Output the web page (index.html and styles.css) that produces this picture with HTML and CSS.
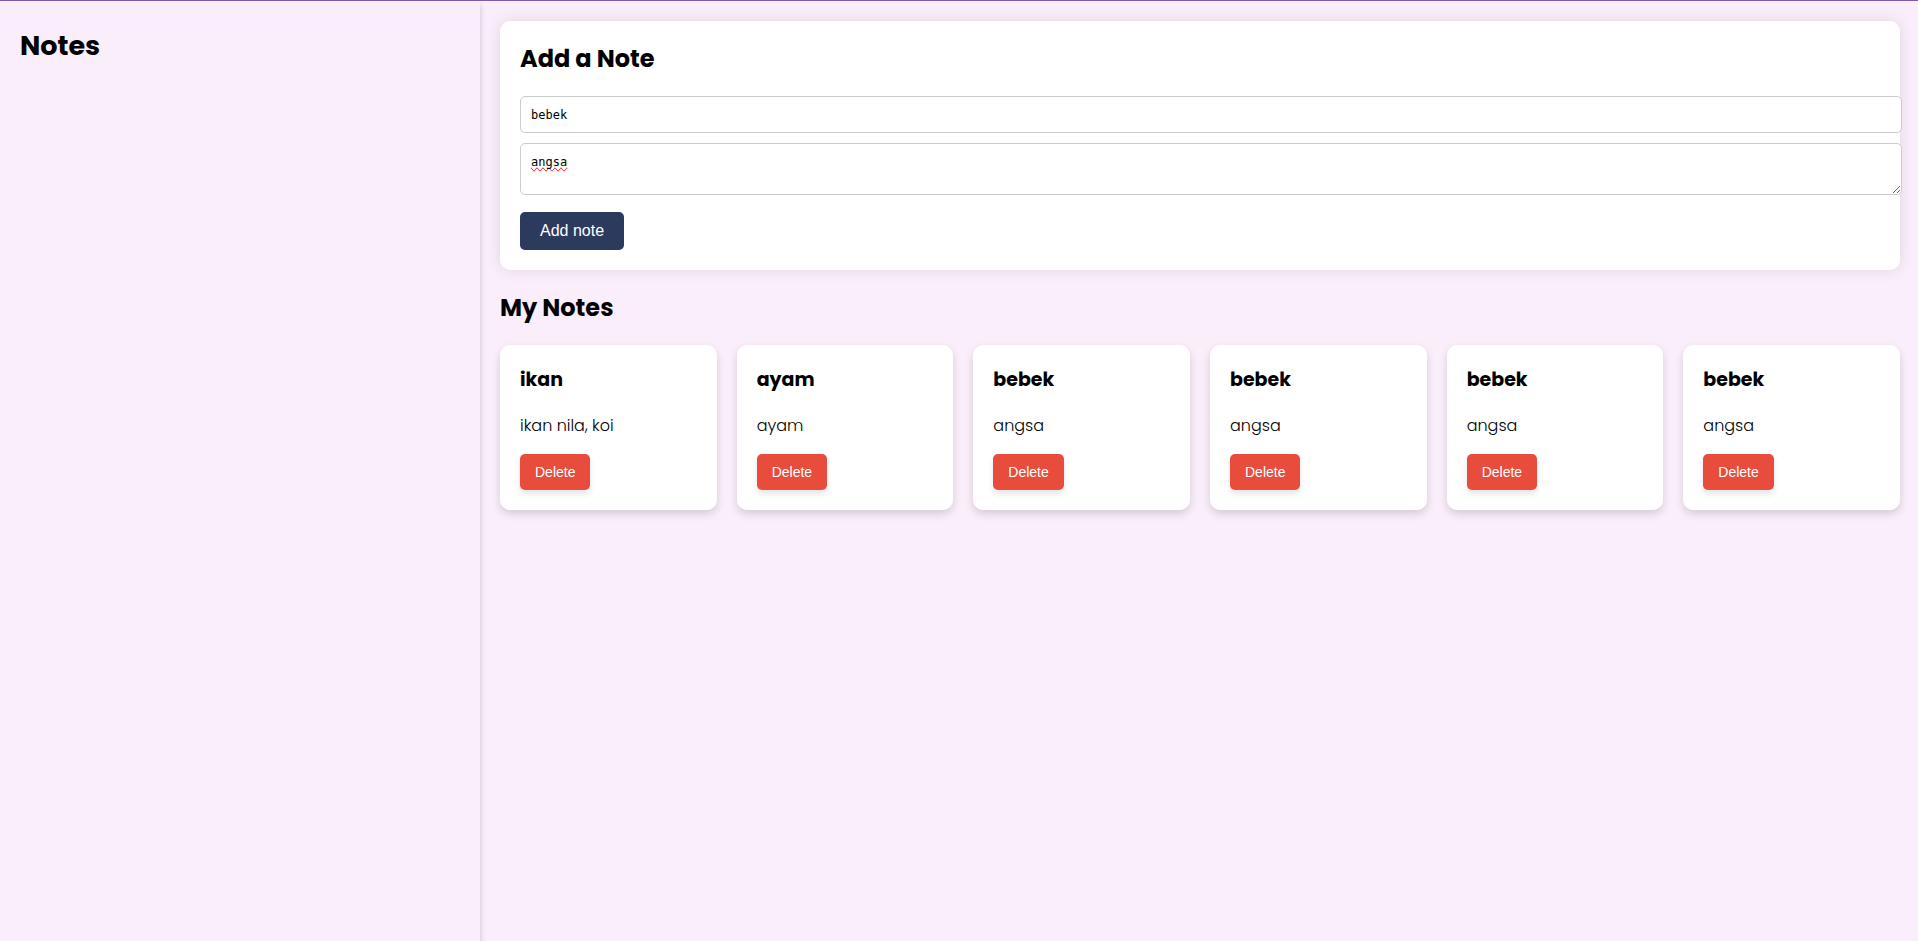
FILE: index.html
```html
<!DOCTYPE html>
<html lang="en">
<head>
<meta charset="utf-8">
<title>Notes</title>
<link rel="stylesheet" href="styles.css">
</head>
<body>
<div class="app">
  <aside class="sidebar">
    <h1 class="brand">Notes</h1>
  </aside>
  <main class="content">
    <form class="note-form">
      <h2 class="heading">Add a Note</h2>
      <input class="field" type="text" value="bebek" aria-label="Title" spellcheck="false">
      <textarea class="field field-body" rows="2" aria-label="Body" spellcheck="false">angsa</textarea>
      <button class="add-button" type="button">Add note</button>
    </form>
    <h2 class="heading list-heading">My Notes</h2>
    <section class="note-list">
      <article class="note"><h3 class="note-title">ikan</h3><p class="note-body">ikan nila, koi</p><button class="delete-button" type="button">Delete</button></article>
      <article class="note"><h3 class="note-title">ayam</h3><p class="note-body">ayam</p><button class="delete-button" type="button">Delete</button></article>
      <article class="note"><h3 class="note-title">bebek</h3><p class="note-body">angsa</p><button class="delete-button" type="button">Delete</button></article>
      <article class="note"><h3 class="note-title">bebek</h3><p class="note-body">angsa</p><button class="delete-button" type="button">Delete</button></article>
      <article class="note"><h3 class="note-title">bebek</h3><p class="note-body">angsa</p><button class="delete-button" type="button">Delete</button></article>
      <article class="note"><h3 class="note-title">bebek</h3><p class="note-body">angsa</p><button class="delete-button" type="button">Delete</button></article>
    </section>
  </main>
</div>
</body>
</html>
```
FILE: styles.css
```css
body {
  margin: 0;
  background: #faeefb;
  color: #000;
  font-family: Poppins, Inter, sans-serif;
}

.app {
  display: flex;
  box-sizing: border-box;
  min-height: 100vh;
  border-top: 1px solid #7d5ba6;
}

.sidebar {
  box-sizing: border-box;
  flex: 0 0 25%;
  min-width: 480px;
  padding: 24px 20px;
  box-shadow: 0 4px 6px rgba(0, 0, 0, 0.2);
}

.brand {
  margin: 0;
  font-size: 27px;
  line-height: 42px;
}

.content {
  flex: 1;
  min-width: 0;
  padding: 20px 18px 20px 20px;
}

.note-form {
  display: flex;
  flex-direction: column;
  align-items: flex-start;
  padding: 20px;
  background: #fff;
  border-radius: 10px;
  box-shadow: 0 0 15px rgba(0, 0, 0, 0.1);
}

.heading {
  margin: 0;
  font-size: 24px;
  line-height: 36px;
}

.field {
  width: 100%;
  margin-top: 10px;
  padding: 11px 10px 9px;
  border: 1px solid #ccc;
  border-radius: 5px;
  background: #fff;
  color: #000;
  font-family: Consolas, "DejaVu Sans Mono", monospace;
  font-size: 12px;
  line-height: 15px;
}

.heading + .field {
  margin-top: 19px;
}

.field-body {
  resize: both;
  text-decoration-line: spelling-error;
}

.add-button,
.delete-button {
  border: 0;
  border-radius: 5px;
  color: #fff;
  font-family: "Liberation Sans", Arial, sans-serif;
}

.add-button {
  margin-top: 17px;
  padding: 10px 20px;
  background: #2c3a5e;
  font-size: 16px;
  line-height: 18px;
}

.list-heading {
  margin: 20px 0 19px;
}

.note-list {
  display: grid;
  grid-template-columns: repeat(6, minmax(0, 1fr));
  gap: 20px;
}

.note {
  padding: 20px;
  background: #fff;
  border-radius: 10px;
  box-shadow: 0 4px 8px rgba(0, 0, 0, 0.15);
}

.note-title {
  margin: 0;
  font-size: 19px;
  line-height: 30px;
}

.note-body {
  margin: 19px 0 16px;
  font-size: 16px;
  font-weight: 300;
  line-height: 24px;
}

.delete-button {
  padding: 10px 15px;
  background: #e74c3c;
  box-shadow: 0 4px 6px rgba(0, 0, 0, 0.1);
  font-size: 14px;
  line-height: 16px;
}
```
